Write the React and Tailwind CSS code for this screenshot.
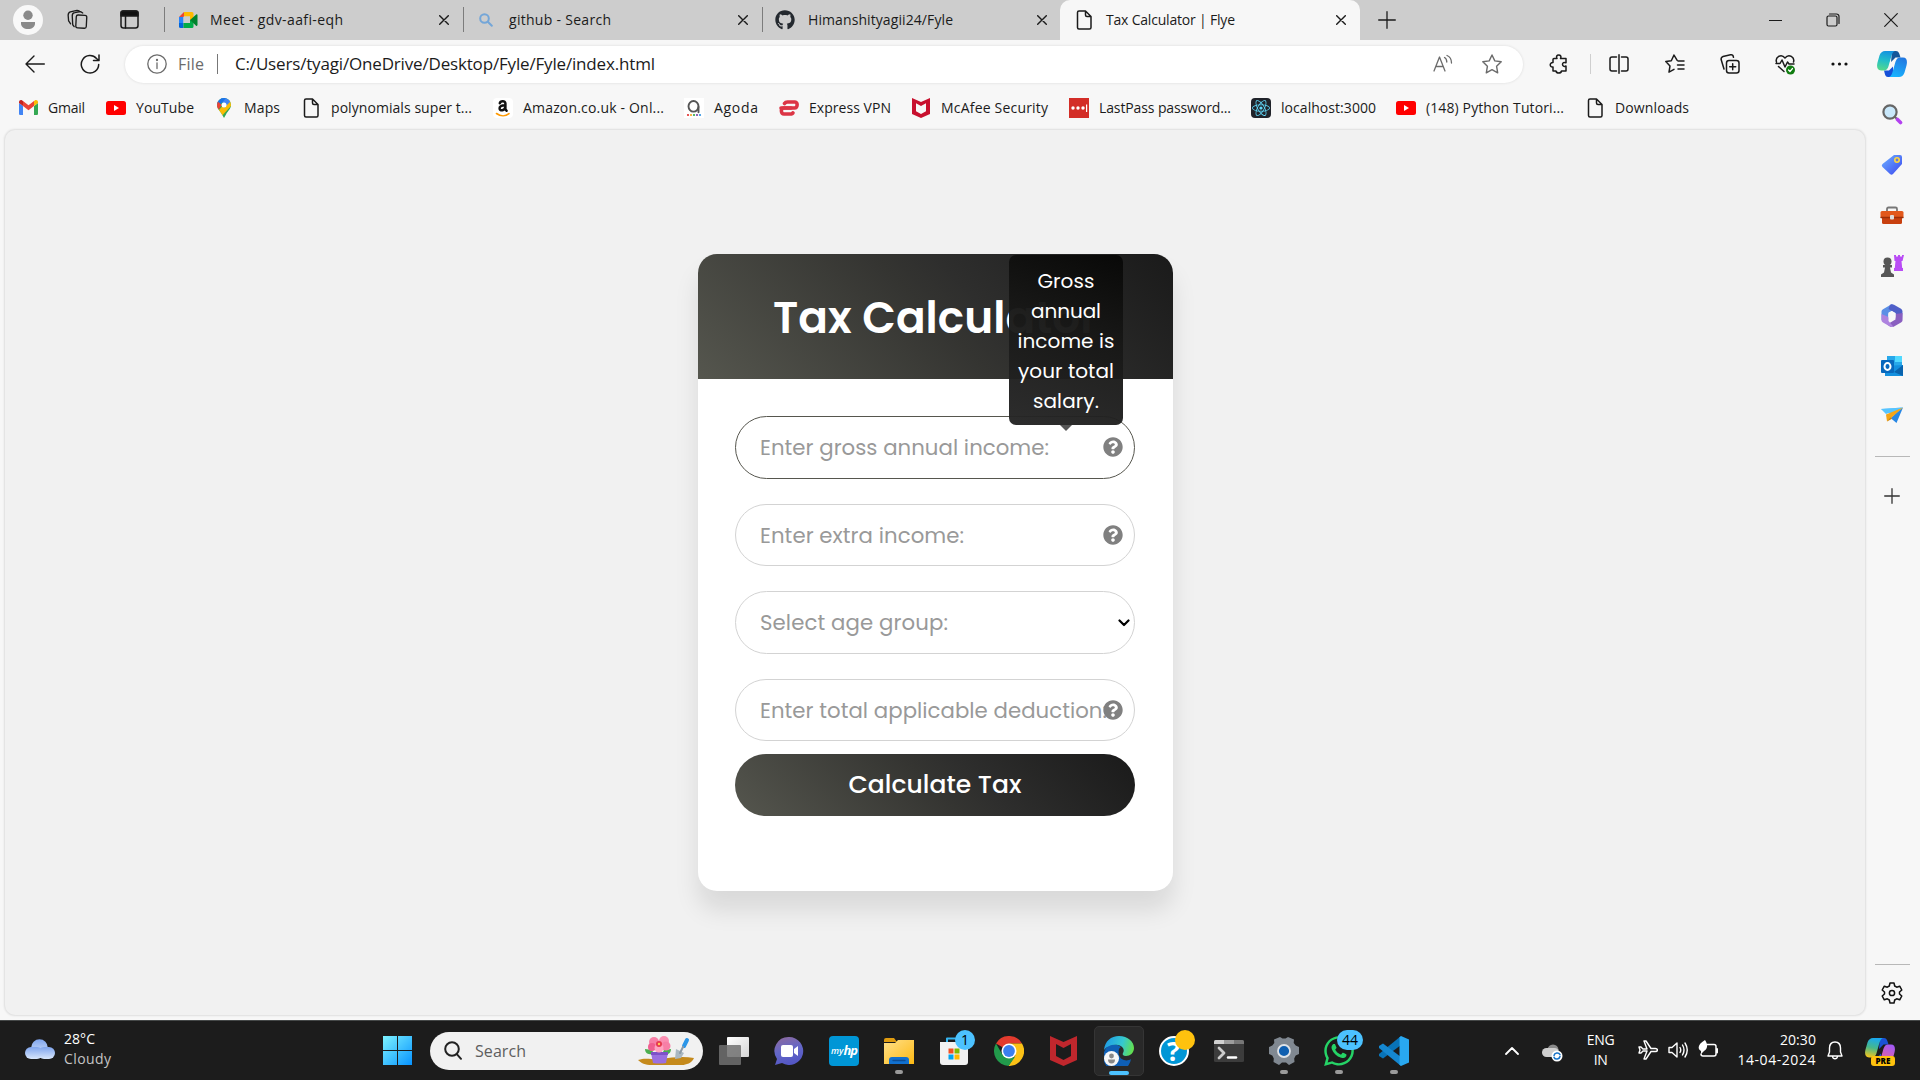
import React, { useLayoutEffect, useRef } from "react";
import { FaGithub, FaReact, FaWhatsapp, FaQuestionCircle } from "react-icons/fa";

// Single-line label whose letter spacing is adjusted so that it fills the given width.
function Fit({ w, className = "", children }) {
  const ref = useRef(null);
  useLayoutEffect(() => {
    const el = ref.current;
    el.style.letterSpacing = "0px";
    const natural = el.getBoundingClientRect().width;
    const n = Math.max(1, el.textContent.length - 1);
    el.style.letterSpacing = `${(w - natural) / n}px`;
  }, [w, children]);
  return <span ref={ref} className={`inline-block whitespace-pre ${className}`}>{children}</span>;
}

function S({ className = "w-5 h-5", vb = "0 0 20 20", children, sw = 1.3 }) {
  return (
    <svg className={`shrink-0 ${className}`} viewBox={vb} fill="none" stroke="currentColor" strokeWidth={sw} strokeLinecap="round" strokeLinejoin="round">
      {children}
    </svg>
  );
}

const Doc = () => (
  <S className="w-4 h-5" vb="0 0 16 20" sw={1.5}>
    <path d="M3 1h6.5L15 6.5V17.500a1.500 1.500 0 0 1-1.500 1.500H3a1.500 1.500 0 0 1-1.500-1.500v-15A1.500 1.500 0 0 1 3 1zM9.500 1v4a1.500 1.500 0 0 0 1.500 1.500h4" />
  </S>
);
const Gmail = () => (
  <S className="w-[19px] h-[15px]" vb="0 0 19 15">
    <g stroke="none">
      <path d="M0 3v10.700c0 .7.600 1.300 1.300 1.300H4V6z" fill="#4285f4" />
      <path d="M15 15h2.700c.7 0 1.300-.6 1.300-1.300V3l-4 3z" fill="#34a853" />
      <path d="M15 1v5l4-3V2c0-1.800-1.900-2.500-3.200-1.600z" fill="#fbbc04" />
      <path d="M4 6V1l5.500 4.200L15 1v5l-5.500 4.200z" fill="#ea4335" />
      <path d="M0 2v1l4 3V1l-.8-.6C1.900-.5 0 .2 0 2z" fill="#c5221f" />
    </g>
  </S>
);
const YouTube = () => (
  <S className="w-5 h-[14px]" vb="0 0 20 14">
    <rect width="20" height="14" rx="2.500" fill="#f00" stroke="none" />
    <path d="M8 4l5 3-5 3z" fill="#fff" stroke="none" />
  </S>
);
const Maps = () => (
  <S className="w-[14px] h-5" vb="0 0 14 20">
    <defs><clipPath id="pin"><path d="M7 0a7 7 0 0 1 7 7c0 4-3 5.500-5 9.500L7 20l-2-3.500C3 12.500 0 11 0 7a7 7 0 0 1 7-7z" /></clipPath></defs>
    <g clipPath="url(#pin)" stroke="none">
      <path fill="#34a853" d="M0 0h14v20H0z" />
      <path fill="#fbbc04" d="M0 14L14-1v9L3 20H0z" />
      <path fill="#4285f4" d="M4 0h10v3L7 10z" />
      <path fill="#1a73e8" d="M0 0h9L2 8 0 6z" />
      <path fill="#ea4335" d="M0 3l5 4-4 5-2-3z" />
      <circle cx="7" cy="7" r="2.500" fill="#fff" />
    </g>
  </S>
);
const Amazon = () => (
  <span className="flex w-5 h-5 shrink-0 items-center justify-center rounded-sm bg-white">
    <S className="w-5 h-5">
      <path d="M6.800 5.300C7.300 2.700 12.400 2.400 12.400 5.500v5.700l1.200 1.500M12.200 7.300C8 7.300 6.300 8.600 6.600 10.800c.4 2.300 5 2 5.800-1.800" stroke="#111" strokeWidth="2.500" />
      <path d="M3.500 15.500c4 3 9 3 12.500.2" stroke="#f90" strokeWidth="1.600" />
    </S>
  </span>
);
const Agoda = () => (
  <S>
    <rect width="20" height="20" fill="#fff" stroke="none" />
    <ellipse cx="9.500" cy="8.300" rx="5" ry="5.300" stroke="#555" strokeWidth="1.900" />
    <path d="M14.500 9v5.200" stroke="#555" strokeWidth="1.900" />
    <g stroke="none"><circle cx="4" cy="17" r="1.100" fill="#e12d2d" /><circle cx="7" cy="17" r="1.100" fill="#f9a51a" /><circle cx="10" cy="17" r="1.100" fill="#2aa84a" /><circle cx="13" cy="17" r="1.100" fill="#7d3fa0" /><circle cx="16" cy="17" r="1.100" fill="#2a8fe0" /></g>
  </S>
);
const Express = () => (
  <S className="w-5 h-4" vb="0 0 20 16" sw={3.600}>
    <g stroke="#dc3545"><path d="M5.500 3.500Q6.500 2 8.500 2H16c3 0 2.800 6-.5 6H2" /><path d="M12 8H4.500c-3 0-2.800 6 .5 6H11q2.500 0 3-1.200" /></g>
  </S>
);
const McAfee = ({ big }) => (
  <S className={big ? "w-[27px] h-[30px] -ml-px" : "w-[18px] h-5"} vb="0 0 27 30">
    <path d="M0 0l13.500 6L27 0v24l-13.500 6L0 24zM6 8v12l7.500 4 7.500-4V8l-7.500 4z" fill={big ? "#c0272d" : "#c8102e"} fillRule="evenodd" stroke="none" />
  </S>
);
const LastPass = () => (
  <S><rect width="20" height="20" fill="#d32d27" stroke="none" /><g fill="#fff" stroke="none"><circle cx="4" cy="10" r="1.700" /><circle cx="9" cy="10" r="1.700" /><circle cx="14" cy="10" r="1.700" /><rect x="17" y="6.500" width="1.200" height="7.500" /></g></S>
);
const ReactLogo = () => <span className="flex w-5 h-5 shrink-0 items-center justify-center rounded-sm bg-[#20232a]"><FaReact className="w-[18px] h-[18px] text-[#61dafb]" /></span>;
const Meet = () => (
  <S className="w-[19px] h-4" vb="0 0 19 16">
    <g stroke="none"><path d="M5 0v5H0z" fill="#ea4335" /><path d="M0 5h4.500v6H0z" fill="#2684fc" /><path d="M0 11h4.500v5H1.500A1.500 1.500 0 0 1 0 14.500z" fill="#0066da" /><path d="M5 0h8a1.500 1.500 0 0 1 1.500 1.500V8L11 8V4.500H5z" fill="#ffba00" /><path d="M4.500 11H11V8l3.500 0v6.500A1.500 1.500 0 0 1 13 16H4.500z" fill="#00ac47" /><path d="M11 8l6.200-5.500c.7-.6 1.300 0 1.300.6v10c0 .7-.7 1.200-1.400.6z" fill="#00832d" /><path d="M4.500 4.500H11v6.500H4.500z" fill="#cdcdcd" /></g>
  </S>
);
const Close = () => <S className="w-[10px] h-[10px]" vb="0 0 10 10" sw={1.400}><path d="M.7.7l8.600 8.600M9.300.7L.7 9.300" /></S>;

const Gap = ({ c }) => <div className={`shrink-0 ${c}`} />;
const Rule = () => <div className="w-px h-[25px] shrink-0 bg-[#7c7c7c]" />;

function TabStrip() {
  return (
    <div className="flex h-10 items-center bg-[#cdcdcd] pb-px text-[14px] text-[#1b1b1b]">
      <div className="ml-[13px] flex w-[30px] h-[30px] shrink-0 items-center justify-center rounded-full bg-[#f8f8f8]">
        <S className="w-4 h-5" vb="0 0 16 20"><g fill="#8a8a8a" stroke="none"><circle cx="8" cy="5.200" r="4.700" /><path d="M1 12h14v1.500C15 17 12 19 8 19s-7-2-7-5.500z" /></g></S>
      </div>
      <Gap c="w-[24px]" />
      <S className="w-[21px] h-[21px]" vb="0 0 22 21" sw={1.400}>
        <rect x="9.500" y="6" width="11" height="13.500" rx="2" transform="rotate(3 15 12)" />
        <path d="M7.500 18L6 16 5.500 6.500c0-2 1-3 2.700-3.200l6-1 2.300 1.400M3.800 15L1.700 12 1.200 6C1.200 4 2 3 3.500 2.500L10.500.9l2.200.6" />
      </S>
      <Gap c="w-[32px]" />
      <S className="w-[19px] h-[19px]" vb="0 0 19 19" sw={1.500}><rect x="1" y="1" width="17" height="17" rx="2.500" /><path d="M1 3q0-2 2-2h13q2 0 2 2v3H1z" fill="#111" /><path d="M5.500 6v12" /></S>
      <Gap c="w-[25px]" />
      <Rule />
      <div className="flex w-[298px] shrink-0 items-center pl-[14px]">
        <Meet />
        <div className="w-[246px] pl-[12px]"><Fit w={133}>Meet - gdv-aafi-eqh</Fit></div>
        <div className="-ml-[5px] flex"><Close /></div>
      </div>
      <Rule />
      <div className="flex w-[298px] shrink-0 items-center pl-[15px]">
        <S className="w-[14px] h-[14px] text-[#74a6d8]" vb="0 0 14 14" sw={2}><circle cx="5.500" cy="5.500" r="4.300" /><path d="M8.800 8.800l4 4" /></S>
        <div className="w-[245px] pl-[16px]"><Fit w={102}>github - Search</Fit></div>
        <Close />
      </div>
      <Rule />
      <div className="flex w-[297px] shrink-0 items-center pl-[12px]">
        <FaGithub className="w-5 h-5 shrink-0 text-[#24292f]" />
        <div className="w-[242px] pl-[13px]"><Fit w={145}>Himanshityagii24/Fyle</Fit></div>
        <Close />
      </div>
      <div className="mt-px flex h-10 w-[300px] shrink-0 items-center rounded-t-[10px] bg-[#f7f7f7] pb-px pl-[16px]">
        <Doc />
        <div className="w-[244px] pl-[14px]"><Fit w={129}>Tax Calculator | Flye</Fit></div>
        <Close />
      </div>
      <Gap c="w-[18px]" />
      <S className="w-[18px] h-[18px]" vb="0 0 18 18"><path d="M9 .7v16.600M.7 9h16.600" /></S>
      <Gap c="w-[373px]" />
      <S className="w-[13px] h-3" vb="0 0 13 12" sw={1.200}><path d="M0 6.500h13" /></S>
      <Gap c="w-[44px]" />
      <S className="w-[14px] h-[14px]" vb="0 0 14 14" sw={1.200}><rect x="1" y="3" width="10" height="10" rx="1.500" /><path d="M3.500 1h7A2.500 2.500 0 0 1 13 3.500v7" /></S>
      <Gap c="w-[44px]" />
      <S className="w-[14px] h-[14px]" vb="0 0 14 14" sw={1.200}><path d="M.7.7l12.600 12.600M13.300.7L.7 13.300" /></S>
    </div>
  );
}

const Copilot = ({ pre }) => (
  <svg className={pre ? "w-[30px] h-[30px] shrink-0" : "w-[30px] h-[28px] shrink-0"} viewBox="0 0 30 28">
    <defs>
      <linearGradient id={pre ? "cpa" : "ca"} x1=".5" y1="0" x2=".3" y2="1"><stop stopColor={pre ? "#19a9f0" : "#1393e0"} /><stop offset=".5" stopColor={pre ? "#47b88a" : "#22bfc8"} /><stop offset="1" stopColor={pre ? "#f5c51c" : "#55d98a"} /></linearGradient>
      <linearGradient id={pre ? "cpb" : "cb"} x1=".7" y1="0" x2=".3" y2="1"><stop stopColor={pre ? "#a259f5" : "#2278e0"} /><stop offset="1" stopColor={pre ? "#f5648a" : "#18b4ff"} /></linearGradient>
    </defs>
    <path d="M15 1h4c3 0 3.500 3 4.500 6.500h-5L14 12z" fill={pre ? "#1a52d6" : "#14569a"} />
    <path d="M16 27h-5c-3 0-3-3-4-6.500h5l4-4z" fill="#1550d8" />
    <path d="M8 1h10c-3 1-3.500 5-5 10s-2 9.500-6 9.500H4c-4 0-4.500-4-3.500-8l2-7C3.500 2.500 5.500 1 8 1z" fill={`url(#${pre ? "cpa" : "ca"})`} />
    <path d="M22 27H12c3-1 3.500-5 5-10s2-9.500 6-9.500h3c4 0 4.500 4 3.500 8l-2 7C26.500 25.500 24.500 27 22 27z" fill={`url(#${pre ? "cpb" : "cb"})`} />
  </svg>
);

function Toolbar() {
  return (
    <div className="flex h-12 items-center text-[#1b1b1b]">
      <Gap c="w-[25px]" />
      <S className="-mt-px w-5 h-[18px]" vb="0 0 20 18" sw={1.400}><path d="M19.300 9H1M9 1L1 9l8 8" /></S>
      <Gap c="w-[35px]" />
      <S className="-mt-px w-5 h-5" sw={1.500}><path d="M18.700 10.500A8.700 8.700 0 1 1 16.500 4.500l2.500 2M19 1v5.500h-5.500" /></S>
      <Gap c="w-[25px]" />
      <div className="flex h-[37px] w-[1398px] shrink-0 items-center rounded-full bg-white shadow-[0_0_3px_rgba(0,0,0,0.12)]">
        <Gap c="w-[22px]" />
        <S className="w-5 h-5 text-[#6b6b6b]" sw={1.300}><circle cx="10" cy="10" r="9.200" /><path d="M10 8.800v5.700" /><circle cx="10" cy="6" r=".5" fill="currentColor" /></S>
        <div className="-mt-px w-[51px] pl-[11px] text-[16px] text-[#6b6b6b]"><Fit w={26}>File</Fit></div>
        <div className="-ml-px h-5 w-px bg-[#777]" />
        <div className="-mt-px w-[1216px] pl-[17px] text-[17px]"><Fit w={420}>C:/Users/tyagi/OneDrive/Desktop/Fyle/Fyle/index.html</Fit></div>
        <S className="-ml-px w-5 h-5 text-[#6b6b6b]" sw={1.300}><path d="M1 17L6.500 3 12 17M3 12.500h7M11.500 3.500c1.500.8 2.300 2.300 2.300 4.500M14 1.500c3 1.300 4.500 3.800 4.500 7.500" /></S>
        <Gap c="w-[29px]" />
        <S className="w-5 h-5 text-[#6b6b6b]" sw={1.400}><path d="M10 1l2.800 5.900 6.400.9-4.600 4.500 1.100 6.500L10 15.700l-5.700 3.100 1.100-6.500L.8 7.800l6.400-.9z" /></S>
      </div>
      <Gap c="w-[26px]" />
      <S className="w-5 h-5" sw={1.500}><path d="M5 4.500h3C6.800 2.500 8 1 9.700 1s3 1.500 1.800 3.500H17v4.300c-2-1-3.500 0-3.500 1.500s1.500 2.700 3.500 1.700V17h-4.500c-.5 2.800-5 2.800-5.500 0H4v-4C.3 13.500.3 8.300 4 8.500V5.500q0-1 1-1z" /></S>
      <div className="ml-[21px] mr-[18px] h-5 w-px shrink-0 bg-[#cfcfcf]" />
      <S className="w-5 h-5" sw={1.500}><path d="M7.500 3H3a2 2 0 0 0-2 2v10a2 2 0 0 0 2 2h4.500M12.500 3H17a2 2 0 0 1 2 2v10a2 2 0 0 1-2 2h-4.500M10 .8v18.400" /></S>
      <Gap c="w-[36px]" />
      <S className="w-5 h-5" sw={1.500}><path d="M12 6.200L9 1 6.300 6.800.8 7.600l4.200 4.300-1 6.200 5-2.800M13 7h6M12.500 11H19M13 15h6" /></S>
      <Gap c="w-[35px]" />
      <S className="w-5 h-5" sw={1.500}><rect x="6.500" y="6.500" width="12.500" height="12.500" rx="2.500" /><path d="M12.700 9.700v6M9.700 12.700h6M4 15L1.200 5.800C.8 4 1.400 3 3 2.500l7.500-1.700c1.700-.3 2.700.5 3 2.500" /></S>
      <Gap c="w-[35px]" />
      <S className="w-5 h-[21px]" vb="0 0 20 21" sw={1.500}><path d="M1.500 8C0 3.500 6-1 10 4c4-5 10-.5 8.500 4M1 9.500h4l2-3.500 3 7 2.500-5 1.500 2h5M3.500 12.500L9 17.500" /><circle cx="15.500" cy="16" r="4.500" fill="#107c10" stroke="none" /><path d="M13.500 16l1.500 1.500 2.500-3" stroke="#fff" strokeWidth="1.200" /></S>
      <Gap c="w-[36px]" />
      <S className="w-[17px] h-4" vb="0 0 17 4"><g fill="#111" stroke="none"><circle cx="2" cy="2" r="1.600" /><circle cx="8.500" cy="2" r="1.600" /><circle cx="15" cy="2" r="1.600" /></g></S>
      <Gap c="w-[29px]" />
      <Copilot />
    </div>
  );
}

const bookmarks = [
  { icon: <Gmail />, label: "Gmail", w: 37, box: "w-[87px]", pad: "pl-[10px]" },
  { icon: <YouTube />, label: "YouTube", w: 58, box: "w-[111px]", pad: "pl-[10px]" },
  { icon: <Maps />, label: "Maps", w: 36, box: "w-[86px]", pad: "pl-[13px]" },
  { icon: <Doc />, label: "polynomials super t...", w: 141, box: "w-[190px]", pad: "pl-[12px]" },
  { icon: <Amazon />, label: "Amazon.co.uk - Onl...", w: 141, box: "w-[191px]", pad: "pl-[10px]" },
  { icon: <Agoda />, label: "Agoda", w: 44, box: "w-[95px]", pad: "pl-[10px]" },
  { icon: <Express />, label: "Express VPN", w: 82, box: "w-[133px]", pad: "pl-[10px]" },
  { icon: <McAfee />, label: "McAfee Security", w: 107, box: "w-[157px]", pad: "pl-[11px]" },
  { icon: <LastPass />, label: "LastPass password...", w: 132, box: "w-[182px]", pad: "pl-[10px]" },
  { icon: <ReactLogo />, label: "localhost:3000", w: 95, box: "w-[145px]", pad: "pl-[10px]" },
  { icon: <YouTube />, label: "(148) Python Tutori...", w: 138, box: "w-[191px]", pad: "pl-[10px]" },
  { icon: <Doc />, label: "Downloads", w: 74, box: "w-[110px]", pad: "pl-[12px]" },
];

function Bookmarks() {
  return (
    <div className="flex h-[41px] items-center pl-[19px] pb-[2px] text-[14px] text-[#1b1b1b]">
      {bookmarks.map((b, i) => (
        <div key={i} className={`flex shrink-0 items-center ${b.box}`}>
          {b.icon}
          <div className={b.pad}><Fit w={b.w}>{b.label}</Fit></div>
        </div>
      ))}
    </div>
  );
}

function Sidebar() {
  return (
    <div className="flex w-[54px] shrink-0 flex-col items-center text-[#333] -mt-[41px]">
      <Gap c="h-[15px]" />
      <S className="w-[22px] h-[22px]" vb="0 0 22 22"><circle cx="9" cy="9" r="6.600" fill="#c9e8fb" stroke="#666" strokeWidth="2.200" /><path d="M14 14l2 2" stroke="#666" strokeWidth="2" /><path d="M16.500 16.500l3 3" stroke="#b341f0" strokeWidth="3.600" /></S>
      <Gap c="h-[29px]" />
      <S className="w-[22px] h-[22px]" vb="0 0 22 22"><defs><linearGradient id="tag" x1="0" y1="0" x2="1" y2="1"><stop stopColor="#6db3ff" /><stop offset="1" stopColor="#3c46f0" /></linearGradient></defs><path d="M13 1h6q2 0 2 2v7L12 20q-1.500 1.500-3 0l-7.500-7q-1.500-1.500 0-3z" fill="url(#tag)" stroke="none" /><circle cx="16" cy="6" r="2.200" fill="#6a79d8" stroke="#ffd83d" strokeWidth="1.600" /></S>
      <Gap c="h-[29px]" />
      <S className="w-[24px] h-[22px]" vb="0 0 24 22"><path d="M7 6V4q0-1.500 1.500-1.500h7Q17 2.500 17 4v2" stroke="#777" strokeWidth="1.800" /><rect x="2" y="10" width="20" height="9" rx="1.500" fill="#c8400f" stroke="none" /><rect x=".5" y="6" width="23" height="7" rx="1.500" fill="#e2581c" stroke="none" /><path d="M1 12.500h22" stroke="#9c2f08" /><rect x="10" y="10" width="4" height="4.500" rx="1" fill="#ddd" stroke="none" /></S>
      <Gap c="h-[27px]" />
      <S className="w-[24px] h-[24px]" vb="0 0 24 24"><path d="M14 1h2v1.500h2V1h2v1.500h2V1h2l-1.500 6h-1l.7 7H23v3h-9v-3h.8l.7-7h-1z" fill="#b94cf5" stroke="none" /><g fill="#565656" stroke="none"><circle cx="7.500" cy="7.500" r="4" /><path d="M3 11h9v2.500h-2l1 5 3 2V23H1v-2.500l3-2 1-5H3z" /></g></S>
      <Gap c="h-[26px]" />
      <S className="w-[22px] h-[23px]" vb="0 0 22 23"><g stroke="none"><path d="M11 0l-9 5.200Q.500 6 .500 7.500v8.500L7.500 14V8.500L14.500 5z" fill="#5b8fe6" /><path d="M9 .8q2-1.300 4 0l7 4q1.500 1 1.500 2.700L21 16.500 14.500 13.500v-4.500L7.500 5z" fill="#4f5fc8" /><path d="M21.500 9v7.500q0 1-1.500 2l-7 4q-2 1-4 0l-3-2 8.500-5V10z" fill="#8a5fc0" /><path d="M.500 10v6.500q0 1 1.500 2l7 4q2 1 3.500.3L7.500 17v-4z" fill="#ae83df" /><path d="M11 7.300l3.700 2.100v4.200L11 15.700l-3.700-2.100V9.400z" fill="#f7f7f7" /></g></S>
      <Gap c="h-[28px]" />
      <S className="w-[22px] h-[22px]" vb="0 0 22 22"><g stroke="none"><path d="M6 1h15v11H6z" fill="#28a8ea" /><path d="M14 1h7v6h-7z" fill="#50d9ff" /><path d="M4 11l18-1v11H4z" fill="#1490df" /><path d="M13 17l9-7v11z" fill="#0a63ad" /><rect x="0" y="5" width="13" height="13" rx="1" fill="#0868bd" /></g><ellipse cx="6.500" cy="11.500" rx="3" ry="3.400" stroke="#fff" strokeWidth="2" /></S>
      <Gap c="h-[28px]" />
      <S className="w-[22px] h-[20px]" vb="0 0 22 20"><g stroke="none"><path d="M0 4l22-1.500-8 8z" fill="#57c4ff" /><path d="M22 2.500L15.500 18l-6-5z" fill="#2787e4" /><path d="M0 4l22-1.500L5 9z" fill="#57c4ff" /><path d="M22 2.500L5 9.500l1 7z" fill="#f5a516" /><path d="M6 16.500l3.500-4 1.500 1.300z" fill="#c77e0a" /></g></S>
      <Gap c="h-[31px]" />
      <div className="h-px w-[35px] shrink-0 bg-[#b8b8b8]" />
      <Gap c="h-[31px]" />
      <S className="w-4 h-4" vb="0 0 16 16"><path d="M8 .7v14.600M.7 8h14.600" /></S>
      <div className="grow" />
      <div className="h-px w-[35px] shrink-0 bg-[#b8b8b8]" />
      <Gap c="h-[17px]" />
      <S className="w-[22px] h-[22px] text-[#111]" vb="0 0 22 22" sw={1.500}><path d="M9 1h4l.7 3 2 1.200 3-1L20.800 8l-2.300 2v2l2.300 2-2.100 3.800-3-1-2 1.200-.7 3H9l-.7-3-2-1.200-3 1L1.200 14l2.300-2v-2L1.200 8l2.100-3.800 3 1 2-1.200z" /><circle cx="11" cy="11" r="2.600" /></S>
      <Gap c="h-[16px]" />
    </div>
  );
}

function Field({ label, w, dark, help, select, tip, h }) {
  return (
    <div className={`relative flex w-[400px] items-center rounded-[32px] border pl-[24px] pt-px text-[21.250px] text-[#999] ${h} ${dark ? "border-[#56564e]" : "border-[#d3d3d3]"}`}>
      <Fit w={w}>{label}</Fit>
      {help && <FaQuestionCircle className="absolute right-[11px] top-[20px] w-5 h-5 text-[#808080]" />}
      {select && <S className="absolute right-[4px] top-[27px] w-[12px] h-[8px] text-black" vb="0 0 12 8" sw={2.200}><path d="M1.500 1.500L6 6l4.500-4.500" /></S>}
      {tip && (
        <div className="absolute right-[11px] bottom-[53px] flex h-[170px] w-[114px] flex-col items-center rounded-[7px] bg-[linear-gradient(200deg,#080807f7_0%,#181817f7_45%,#262626f7_100%)] pt-[11px] text-[20px] leading-[30px] text-white">
          <Fit w={57}>Gross</Fit>
          <Fit w={70}>annual</Fit>
          <Fit w={97}>income is</Fit>
          <Fit w={96}>your total</Fit>
          <Fit w={66}>salary.</Fit>
          <div className="absolute left-[51px] top-[170px] h-0 w-0 border-x-[6px] border-t-[6px] border-x-transparent border-t-[#555]" />
        </div>
      )}
    </div>
  );
}

function Card() {
  return (
    <div className="mt-[124px] ml-[693px] h-[637px] w-[475px] rounded-[19px] bg-white font-['Poppins','Inter',sans-serif] shadow-[0_19px_25px_rgba(0,0,0,0.1)]">
      <div className="flex h-[125px] items-center justify-center rounded-t-[19px] bg-[linear-gradient(45deg,#55564e_0%,#343431_50%,#2e2e2d_60%,#1a1a1a_100%)] pt-0.5 text-[43.750px] font-semibold text-white">
        <Fit w={325}>Tax Calculator</Fit>
      </div>
      <div className="flex flex-col pl-[37px] pt-[37px]">
        <Field label="Enter gross annual income:" w={289} dark help tip h="h-[63px]" />
        <Gap c="h-[25px]" />
        <Field label="Enter extra income:" w={204} help h="h-[62px]" />
        <Gap c="h-[25px]" />
        <Field label="Select age group:" w={188} select h="h-[63px]" />
        <Gap c="h-[25px]" />
        <Field label="Enter total applicable deduction:" w={347} help h="h-[62px]" />
        <div className="mt-[13px] flex h-[62px] w-[400px] items-center justify-center rounded-full bg-[linear-gradient(45deg,#55564e_0%,#343431_50%,#2e2e2d_60%,#1a1a1a_100%)] text-[25px] font-medium text-white">
          <Fit w={173}>Calculate Tax</Fit>
        </div>
      </div>
    </div>
  );
}

function Slot({ children, run, active }) {
  return (
    <div className={`relative flex w-[50px] h-[50px] mr-[5px] shrink-0 items-center justify-center rounded-[5px] ${active ? "border border-[#353535] bg-[#292929]" : ""}`}>
      {children}
      {run && <div className="absolute bottom-0.5 left-[21px] h-1 w-2 rounded-full bg-[#9a9a9a]" />}
      {active && <div className="absolute bottom-0 left-[14px] h-1 w-5 rounded-full bg-[#4cc2ff]" />}
    </div>
  );
}

const B = ({ children, vb = "0 0 30 30" }) => <S className="w-[30px] h-[30px]" vb={vb}>{children}</S>;

function Taskbar() {
  return (
    <div className="flex h-[60px] items-center border-t border-[#454848] bg-[#1c1c1c] text-white">
      <Gap c="w-[25px]" />
      <S className="w-[30px] h-5 -mt-1" vb="0 0 30 20"><defs><linearGradient id="cl" x1="0" y1="0" x2="0" y2="1"><stop stopColor="#7fa5ee" /><stop offset="1" stopColor="#d8e6fb" /></linearGradient></defs><g fill="url(#cl)" stroke="none"><circle cx="14.500" cy="8.500" r="8.300" /><rect x="0" y="8" width="18" height="12" rx="6" /><rect x="13" y="8" width="17" height="12" rx="6" /></g></S>
      <div className="-mt-[3px] flex w-[328px] flex-col pl-[9px] text-[14px] leading-5">
        <div className="h-5"><Fit w={31}>28°C</Fit></div>
        <div className="h-5 text-[#c4c4c4]"><Fit w={47}>Cloudy</Fit></div>
      </div>
      <S className="w-[29px] h-[29px]" vb="0 0 29 29"><defs><linearGradient id="win" gradientUnits="userSpaceOnUse" x1="0" y1="0" x2="29" y2="29"><stop stopColor="#7df3ff" /><stop offset="1" stopColor="#0793ff" /></linearGradient></defs><path d="M0 0h14v14H0zM15 0h14v14H15zM0 15h14v14H0zM15 15h14v14H15z" fill="url(#win)" stroke="none" /></S>
      <div className="ml-[18px] flex h-[38px] w-[273px] shrink-0 items-center rounded-full bg-[#f1f1f1] text-[#222]">
        <S className="ml-[14px] w-[18px] h-[19px]" vb="0 0 18 19" sw={2}><circle cx="8" cy="8" r="6.800" /><path d="M12.800 13.200L17 17.800" /></S>
        <div className="w-[176px] pl-[13px] text-[16px] text-[#5e5e5e]"><Fit w={51}>Search</Fit></div>
        <S className="w-[57px] h-[30px]" vb="0 0 57 30">
          <g stroke="none">
            <path d="M0 24c8-3 14 0 22-1 14-2 24-3 34-1-2 5-8 7-12 7H14C7 29 3 27 0 24z" fill="#c58a1c" />
            <path d="M7 13l7 1 2 4c-4 1-9 0-9-5zM33 13l-7 1-2 4c5 1 9 0 9-5z" fill="#4caf50" />
            <path d="M13 17h17l-2 10q-7 1-13 0z" fill="#9a6fe0" /><path d="M13 16h17v3H13z" fill="#7d51c8" />
            <circle cx="16" cy="6" r="5" fill="#f77fa6" /><circle cx="26" cy="5" r="5" fill="#fb8fb2" /><circle cx="14" cy="11" r="4" fill="#ef5f8f" /><circle cx="28" cy="10" r="4.500" fill="#f77fa6" /><circle cx="21" cy="12" r="4.500" fill="#ffa3c0" /><circle cx="21" cy="8" r="3" fill="#e63950" /><circle cx="21" cy="8" r="1.200" fill="#fc5" />
            <path d="M38 13l8 4-3 5-6 1z" fill="#aab8c2" />
          </g>
          <path d="M49 4l-3 6" stroke="#2b96e8" strokeWidth="4" /><path d="M45 11l-3 6" stroke="#8b9aa6" strokeWidth="2" />
        </S>
      </div>
      <Gap c="w-[6px]" />
      <Slot><B><defs><linearGradient id="tv" x1="0" y1="0" x2="1" y2="1"><stop stopColor="#fff" /><stop offset="1" stopColor="#d5d5d5" /></linearGradient></defs><rect x="8" y="1" width="22" height="20" rx="1" fill="url(#tv)" stroke="none" /><rect x="0" y="9" width="22" height="20" rx="1" fill="#707070" opacity=".85" stroke="none" /></B></Slot>
      <Slot><B><defs><linearGradient id="chat" x1=".2" y1="0" x2=".5" y2="1"><stop stopColor="#8c6a9f" /><stop offset=".5" stopColor="#6467c8" /><stop offset="1" stopColor="#5356c4" /></linearGradient></defs><path d="M15 1a14 14 0 1 1-7 26l-7 2 2-6A14 14 0 0 1 15 1z" fill="url(#chat)" stroke="none" /><rect x="7" y="9" width="12" height="12" rx="2" fill="#fff" stroke="none" /><path d="M20 13l4-3v10l-4-3z" fill="#fff" stroke="none" /></B></Slot>
      <Slot><div className="flex h-[30px] w-[30px] items-center justify-center rounded-sm bg-[#0096d6] italic leading-none"><span className="text-[9px] font-semibold">my</span><span className="text-[13px] font-bold -tracking-[1px]">hp</span></div></Slot>
      <Slot run><B><defs><linearGradient id="fo" x1="0" y1="0" x2="1" y2="1"><stop stopColor="#ffe08a" /><stop offset="1" stopColor="#fdb913" /></linearGradient></defs><g stroke="none"><path d="M0 4q0-2 2-2h8l3 4H0z" fill="#e09c10" /><path d="M0 7h11l3-3h16v24H0z" fill="url(#fo)" /><path d="M5 28v-4q0-3 3-3h14q3 0 3 3v4z" fill="#1170cf" /></g><path d="M9 24.500h12" stroke="#0c4c94" /></B></Slot>
      <Slot><B><path d="M8 7V2.500h12V7" stroke="#35b6f2" strokeWidth="2" /><path d="M1 6h28v20q0 3-3 3H4q-3 0-3-3z" fill="#f2f2f2" stroke="none" /><g stroke="none"><path d="M9.500 12.500h5v5h-5z" fill="#f25022" /><path d="M15.500 12.500h5v5h-5z" fill="#7fba00" /><path d="M9.500 18.500h5v5h-5z" fill="#00a4ef" /><path d="M15.500 18.500h5v5h-5z" fill="#ffb900" /></g></B>
        <div className="absolute left-[26px] top-[4px] flex h-5 w-5 items-center justify-center rounded-full bg-[#4cc2ff] text-[14px] leading-none text-black">1</div></Slot>
      <Slot><B><g stroke="none"><path d="M15 15L2 7.500A15 15 0 0 1 28 7.500H15z" fill="#e33b2e" /><path d="M15 15L28 7.500A15 15 0 0 1 14.500 30L21.500 18.700z" fill="#fbc116" /><path d="M2 7.500L8.500 18.700 15 22l6-1-6.500 9A15 15 0 0 1 2 7.500z" fill="#229a4b" /><path d="M15 7.500h13L21.500 19z" fill="#fbc116" /><circle cx="15" cy="15" r="7.500" fill="#fff" /><circle cx="15" cy="15" r="5.900" fill="#3b7ff0" /></g></B></Slot>
      <Slot><McAfee big /></Slot>
      <Slot active><B><defs><linearGradient id="ed" x1="0" y1=".3" x2="1" y2=".5"><stop stopColor="#1e9be8" /><stop offset=".6" stopColor="#35c8d0" /><stop offset="1" stopColor="#63e04e" /></linearGradient></defs><g stroke="none"><path d="M1 14a14 14 0 1 0 26 9c-4 3-11 1-12-4s0-7 2-8c-6-5-14-2-16 3z" fill="#0f5fb5" /><path d="M0 14C1 5 7 0 15 0c9 0 15 6 15 12 0 5-4 8-8 8-3 0-4-1.500-3-3 2-3 0-7-5-8C8 8 3 10 0 14z" fill="url(#ed)" /><circle cx="7.500" cy="22.500" r="7.500" fill="#f7f7f7" /><circle cx="7.500" cy="20" r="2.400" fill="#888" /><path d="M4 23.500h7q0 4-3.500 4T4 23.500z" fill="#888" /></g></B></Slot>
      <Slot><div className="flex h-[30px] w-[30px] items-center justify-center rounded-full border-2 border-white bg-[#0096d6] pr-px text-[27px] font-bold leading-none">?</div><div className="absolute left-[26px] top-[4px] h-5 w-5 rounded-full bg-[#ffc20e]" /></Slot>
      <Slot><B><g stroke="none"><rect y="4" width="30" height="22" rx="1.500" fill="#3c3c3c" /><path d="M0 8V5.500Q0 4 1.500 4H10v4z" fill="#d0d0d0" /><path d="M10 4h10v4H10z" fill="#9c9c9c" /><path d="M20 4h8.500Q30 4 30 5.500V8H20z" fill="#777" /></g><path d="M5 12l5 5-5 5" stroke="#ccc" strokeWidth="2.800" /><path d="M14 21.500h8" stroke="#fff" strokeWidth="2.500" /></B></Slot>
      <Slot run><B><path d="M11 1l2.500 1.500h3L19 1l6 2.500-.3 3.500 2 2.500L30 11v7l-3.300 1.500-1.500 3 .3 3.500L20 29l-3-2.500h-4L10 29l-5.500-3 .3-3.500-1.500-3L0 18v-7l3.300-1.500 2-2.500L5 3.500z" fill="#808891" stroke="none" /><circle cx="15" cy="15" r="6" fill="#0f5fb0" stroke="#dfe3e8" strokeWidth="1.800" /></B></Slot>
      <Slot run><FaWhatsapp className="h-[34px] w-[34px] shrink-0 text-[#25d366]" /><div className="absolute left-[23px] top-[4px] flex h-5 w-[26px] items-center justify-center rounded-full bg-[#4cc2ff] text-[14px] leading-none text-black">44</div></Slot>
      <Slot run><B><g stroke="none"><path d="M22 0v9L4 22.500 0 20v-2z" fill="#0873b8" /><path d="M0 12v-2l4-2.500L22 21v9z" fill="#1587d0" /><path d="M22 0l8 3.500v23L22 30l-1.500-1.500V1.500z" fill="#29a8f0" /></g></B></Slot>
      <div className="grow" />
      <div className="flex w-[415px] shrink-0 items-center">
        <S className="w-[14px] h-2" vb="0 0 14 8" sw={1.800}><path d="M1 7l6-6 6 6" /></S>
        <Gap c="w-[23px]" />
        <S className="w-[21px] h-[18px] mt-1" vb="0 0 21 18"><g stroke="none"><circle cx="11" cy="6" r="5.500" fill="#8a8a8a" /><rect y="4" width="17" height="9" rx="4.500" fill="#cfcfcf" /><circle cx="15" cy="12" r="5.500" fill="#fff" /></g><path d="M12 11.500a3.200 3.200 0 0 1 6-.8M18 12.500a3.200 3.200 0 0 1-6 .8" stroke="#1673c8" strokeWidth="1.500" /></S>
        <div className="-mt-[2px] flex w-[75px] flex-col items-center text-[14px] leading-5"><Fit w={28}>ENG</Fit><Fit w={14}>IN</Fit></div>
        <S className="w-5 h-5 -mt-px" sw={1.400}><path d="M1 7h2l2 2h4L6 1h2l5 7.500h4.500c2.500 0 2.500 3 0 3H13L8 19H6l3-8H5l-2 2H1l1-3z" /></S>
        <Gap c="w-[10px]" />
        <S className="w-5 h-5 -mt-px" sw={1.400}><path d="M1 7.500h3L9 3v14l-5-4.500H1zM12 7.500q1.500 2.500 0 5M14.500 5q3 5 0 10M17 3q4.500 7 0 14" /></S>
        <Gap c="w-[10px]" />
        <S className="w-5 h-5 -mt-px" sw={1.500}><path d="M9 4.500h7q2 0 2 2V14q0 2-2 2H5q-2 0-2-2" /><path d="M19 9v3.500" strokeWidth="2" /><path d="M7 0c3 4 3 9-1 11l-3 3v-3C-1 9 0 4 7 0z" fill="#fff" stroke="none" /></S>
        <div className="-mt-[2px] flex w-[98px] flex-col items-end text-[14px] leading-5"><Fit w={36}>20:30</Fit><Fit w={78}>14-04-2024</Fit></div>
        <Gap c="w-[11px]" />
        <S className="w-[16px] h-[19px]" vb="0 0 16 19" sw={1.400}><path d="M8 1C4.500 1 2.500 3.500 2.500 7v4L1 15h14l-1.500-4V7C13.500 3.500 11.500 1 8 1zM5.500 15.500c.5 3 4.500 3 5 0" /></S>
        <div className="relative ml-[22px] h-[30px] w-[30px] shrink-0">
          <Copilot pre />
          <div className="absolute left-[6px] top-[20px] flex h-[10px] w-[24px] items-center justify-center rounded-[3px] bg-[#ffc20e] text-[8px] font-extrabold leading-none text-black">PRE</div>
        </div>
      </div>
    </div>
  );
}

export default function App() {
  return (
    <div className="flex h-[1080px] w-[1920px] flex-col overflow-hidden bg-[#f7f7f7] font-['Segoe_UI','Open_Sans',sans-serif]">
      <TabStrip />
      <Toolbar />
      <Bookmarks />
      <div className="flex min-h-0 grow">
        <div className="mb-[5px] ml-[5px] mt-px w-[1860px] shrink-0 rounded-[10px] bg-[#f1f1f1] shadow-[0_0_2px_1px_rgba(0,0,0,0.1)]">
          <Card />
        </div>
        <Sidebar />
      </div>
      <Taskbar />
    </div>
  );
}
